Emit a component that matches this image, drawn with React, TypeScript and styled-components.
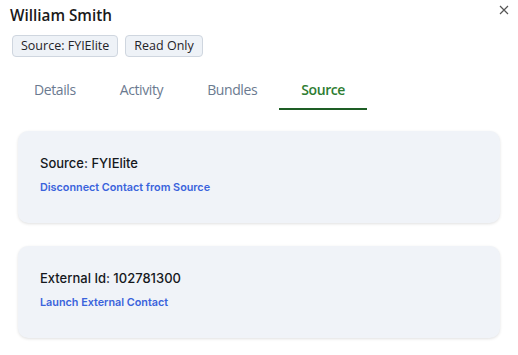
import styled, { createGlobalStyle } from "styled-components";

const GlobalStyle = createGlobalStyle`
    body {
        margin: 0;
        background: #ffffff;
        font-family: "Inter", "Noto Sans", sans-serif;
    }
`;

const tabs = ["Details", "Activity", "Bundles", "Source"];

function App() {
    return (
        <Wrapper>
            <GlobalStyle />
            <Header>
                <Title>William Smith</Title>
                <Close aria-label="Close">
                    <svg width="10" height="10" viewBox="0 0 10 10">
                        <path d="M1 1L9 9M9 1L1 9" stroke="#555" strokeWidth="1.2" />
                    </svg>
                </Close>
            </Header>
            <Badges>
                <Badge>Source: FYIElite</Badge>
                <Badge>Read Only</Badge>
            </Badges>
            <TabBar>
                {tabs.map((t) => (
                    <Tab key={t} $active={t === "Source"}>
                        {t}
                    </Tab>
                ))}
            </TabBar>
            <Cards>
                <Card>
                    <CardTitle>Source: FYIElite</CardTitle>
                    <CardLink href="#">Disconnect Contact from Source</CardLink>
                </Card>
                <Card>
                    <CardTitle>External Id: 102781300</CardTitle>
                    <CardLink href="#">Launch External Contact</CardLink>
                </Card>
            </Cards>
        </Wrapper>
    );
}

export default App;

const Wrapper = styled.div`
    width: 518px;
    height: 355px;
    overflow: hidden;
    display: flex;
    flex-direction: column;
`;

const Header = styled.div`
    display: flex;
    justify-content: space-between;
    align-items: flex-start;
    padding: 5px 9px 0 10px;
`;

const Title = styled.div`
    font-family: "Open Sans", sans-serif;
    font-size: 15.3px;
    font-weight: 600;
    color: #1a1a1a;
    line-height: 20px;
`;

const Close = styled.div`
    width: 10px;
    height: 10px;
    cursor: pointer;
    display: flex;
`;

const Badges = styled.div`
    display: flex;
    gap: 7px;
    padding: 10px 0 0 12px;
`;

const Badge = styled.div`
    font-family: "Open Sans", sans-serif;
    font-size: 12.5px;
    font-weight: 500;
    color: #1f2328;
    background: #eef2f7;
    border: 1px solid #cfd6df;
    border-radius: 4px;
    height: 22px;
    line-height: 20px;
    padding: 0 8px;
    box-sizing: border-box;
`;

const TabBar = styled.div`
    display: flex;
    padding: 16px 0 0 12px;
`;

const Tab = styled.div<{ $active?: boolean }>`
    font-family: "Open Sans", sans-serif;
    font-size: 14px;
    letter-spacing: -0.4px;
    font-weight: ${(p) => (p.$active ? 600 : 400)};
    color: ${(p) => (p.$active ? "#2e7d32" : "#6b7a90")};
    padding: 7px 22px 8px;
    line-height: 20px;
    border-bottom: 2px solid ${(p) => (p.$active ? "#1e5e25" : "transparent")};
    cursor: pointer;
`;

const Cards = styled.div`
    display: flex;
    flex-direction: column;
    gap: 23px;
    padding: 21px 18px 0 18px;
`;

const Card = styled.div`
    height: 92px;
    box-sizing: border-box;
    background: #f0f3f8;
    border-radius: 10px;
    box-shadow: 0 1px 3px rgba(0, 0, 0, 0.12);
    padding: 23px 22px;
    display: flex;
    flex-direction: column;
    gap: 8px;
`;

const CardTitle = styled.div`
    font-size: 13px;
    font-weight: 500;
    color: #15181d;
    line-height: 18px;
`;

const CardLink = styled.a`
    font-size: 10.8px;
    font-weight: 600;
    color: #3a63dc;
    text-decoration: none;
    line-height: 15px;
`;
